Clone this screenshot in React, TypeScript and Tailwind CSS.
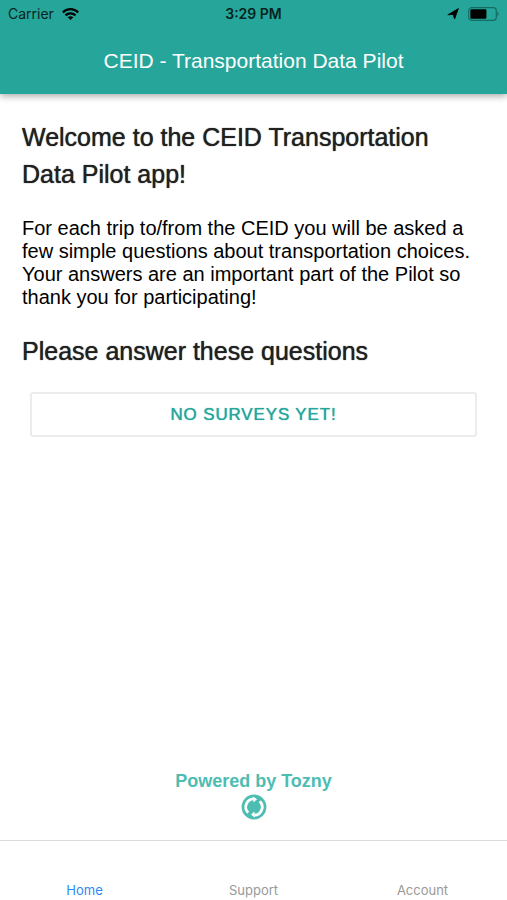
import { clsx } from 'clsx'

// --- Tabs ---
const tabs = [
  { id: 'home', label: 'Home' },
  { id: 'support', label: 'Support' },
  { id: 'account', label: 'Account' },
]

// --- Status Bar ---
function StatusBar() {
  return (
    <div className="grid h-7 grid-cols-3 items-center px-2 font-[Inter,sans-serif] text-sm text-[#06231f]">
      <div className="flex items-center gap-2">
        <span>Carrier</span>
        <svg className="h-3 w-[17px]" viewBox="0 0 17 12" fill="none" stroke="#000" strokeWidth="2.3" aria-hidden="true">
          <path d="M0.8 4.5C5 0.1 12 0.1 16.2 4.5" />
          <path d="M3.5 7.4C6.3 4.6 10.7 4.6 13.5 7.4" />
          <path d="M5.7 9.3C7.3 7.8 9.7 7.8 11.3 9.3L8.5 12Z" fill="#000" stroke="none" />
        </svg>
      </div>
      <span className="text-center font-semibold">3:29 PM</span>
      <div className="flex items-center justify-end gap-2">
        <svg className="h-3 w-3" viewBox="0 0 12 12" fill="#000" stroke="#000" strokeWidth="0.8" strokeLinejoin="round" aria-hidden="true">
          <path d="M11.4 0.6L7.6 11L6.2 6.4L0.8 6.8Z" />
        </svg>
        <svg className="h-[14px] w-8" viewBox="0 0 32 14" aria-hidden="true">
          <rect x="1.7" y="0.7" width="27.6" height="12.6" rx="3" fill="none" stroke="#156b62" strokeWidth="1.2" />
          <rect x="3.4" y="2.3" width="16" height="9.4" rx="1.2" fill="#000" />
          <path d="M30.4 4.6C32 5.4 32 8.6 30.4 9.4Z" fill="#156b62" />
        </svg>
      </div>
    </div>
  )
}

// --- Header ---
function Header() {
  return (
    <header className="relative bg-[#26a69a] shadow-[0_2px_7px_rgba(0,0,0,0.35)]">
      <StatusBar />
      <h1 className="flex h-[66px] items-center justify-center text-[21px] text-white">
        CEID - Transportation Data Pilot
      </h1>
    </header>
  )
}

// --- Tozny Mark ---
function ToznyLogo() {
  return (
    <svg className="size-[26px]" viewBox="0 0 26 26" aria-hidden="true">
      <circle cx="13" cy="13" r="12.4" fill="#4dbdb2" />
      <g fill="none" stroke="#fff" strokeWidth="2.8">
        <path d="M7.2 18.8A8.2 8.2 0 0 1 12.6 4.8" />
        <path d="M18.8 7.2A8.2 8.2 0 0 1 13.4 21.2" />
      </g>
      <path d="M12 2.4L16 5.2L12.6 8.4Z" fill="#fff" />
      <path d="M14 23.6L10 20.8L13.4 17.6Z" fill="#fff" />
    </svg>
  )
}

// --- Tab Bar ---
function TabBar({ active }: { active: string }) {
  return (
    <nav className="grid h-[60px] grid-cols-3 border-t border-[#dcdcdc] font-[Inter,sans-serif] text-[13px]">
      {tabs.map((tab) => (
        <a
          key={tab.id}
          href={`#${tab.id}`}
          className={clsx(
            'flex items-end justify-center',
            tab.id === active ? 'text-[#2b8cf8]' : 'text-[#999999]'
          )}
        >
          {tab.label}
        </a>
      ))}
    </nav>
  )
}

export default function App() {
  return (
    <div className="flex min-h-screen flex-col bg-white font-['Liberation_Sans',Arial,sans-serif] text-black">
      <Header />
      <main className="flex flex-1 flex-col px-[22px] pt-[25px]">
        <h2 className="text-[25px] leading-[37px] text-[#212121] [text-shadow:0_0_1px_#212121]">
          Welcome to the CEID Transportation Data Pilot app!
        </h2>
        <p className="mt-6 text-xl leading-[23px]">
          For each trip to/from the CEID you will be asked a few simple questions about transportation
          choices. Your answers are an important part of the Pilot so thank you for participating!
        </p>
        <h2 className="mt-6 text-[25px] leading-[37px] text-[#212121] [text-shadow:0_0_1px_#212121]">
          Please answer these questions
        </h2>
        <button
          type="button"
          className="mx-2 mt-[22px] h-[45px] rounded-[3px] border-2 border-[#ececec] text-[17px] tracking-wider text-[#26a69a] [text-shadow:0_0_1px_#26a69a]"
        >
          NO SURVEYS YET!
        </button>
      </main>
      <footer className="flex flex-col items-center gap-px pb-5 text-lg leading-6 font-bold text-[#4dbdb2]">
        <span>Powered by Tozny</span>
        <ToznyLogo />
      </footer>
      <TabBar active="home" />
    </div>
  )
}
